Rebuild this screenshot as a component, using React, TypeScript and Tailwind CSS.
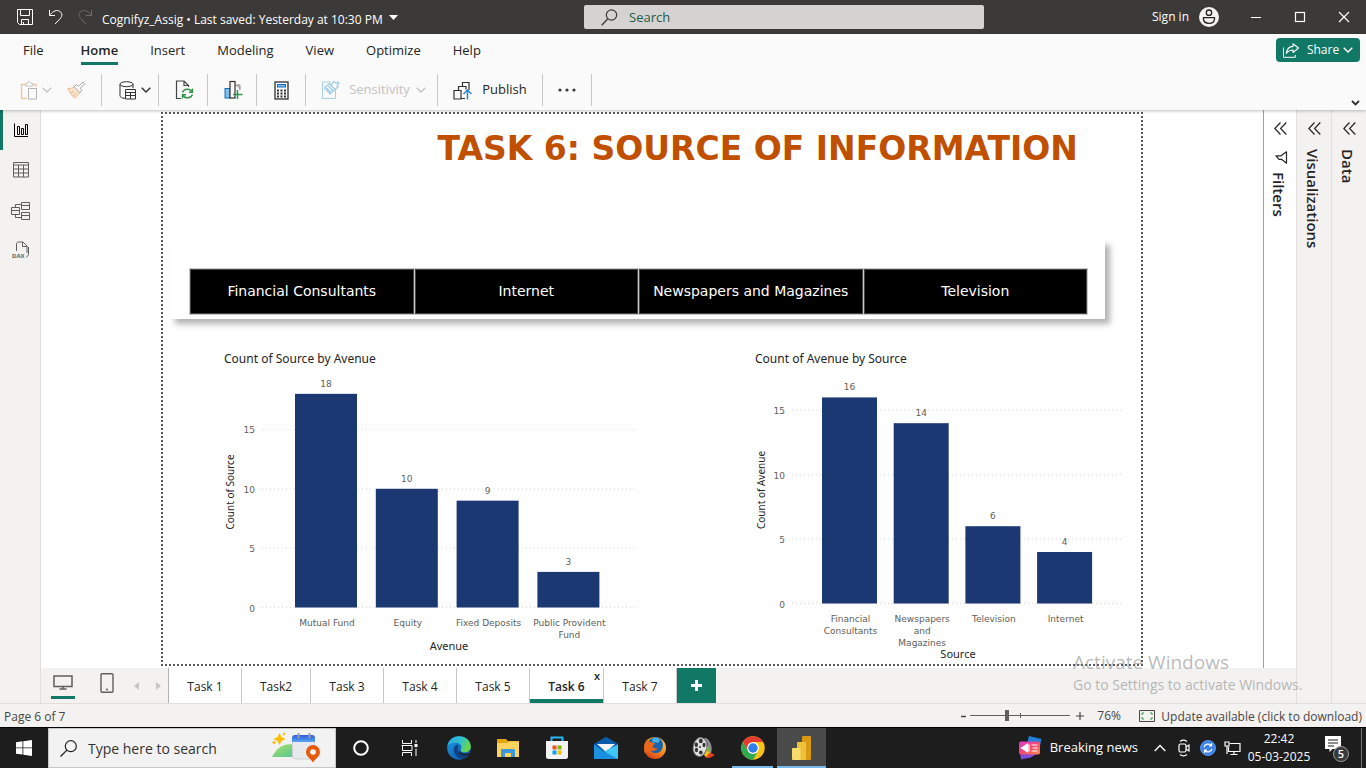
import type { ReactNode } from "react";

type IconProps = { w?: number; h?: number; children: ReactNode; className?: string };

function Icon({ w = 20, h = 20, children, className = "" }: IconProps) {
  return (
    <svg
      width={w}
      height={h}
      viewBox={`0 0 ${w} ${h}`}
      fill="none"
      stroke="currentColor"
      aria-hidden="true"
      className={`shrink-0 ${className}`}
    >
      {children}
    </svg>
  );
}

function Chevron({ className = "" }: { className?: string }) {
  return (
    <Icon w={10} h={6} className={className}>
      <path d="M.7.7 5 5 9.3.7" strokeWidth="1.4" />
    </Icon>
  );
}

function TitleBar() {
  return (
    <header className="flex h-[34px] shrink-0 items-center bg-[#3b3a39] text-[12px] text-white">
      <div className="flex min-w-0 flex-1 items-center pl-[17px]">
        <button aria-label="Save" className="mr-[15px]">
          <Icon w={16} h={16}>
            <path d="M.5.5h15v15H2.5l-2-2zM3.5.5v6h9v-6M4.5 15.5v-5h7v5M6.5 13v2.500" />
          </Icon>
        </button>
        <button aria-label="Undo" className="mr-[15px]">
          <Icon w={15} h={16}>
            <path d="M1.500 1v5.500H7M1.500 6.500C4 3 7.500.8 10.500 1.800c4 1.400 4.200 5 1.800 7.700L7 15" />
          </Icon>
        </button>
        <button aria-label="Redo" className="mr-[9px] text-[#6d6c6b]">
          <Icon w={15} h={16}>
            <path d="M13.500 1v5.500H8M13.500 6.500C11 3 7.500.8 4.500 1.800c-4 1.400-4.200 5-1.800 7.700L8 15" />
          </Icon>
        </button>
        <button className="flex items-center gap-[6px] pt-[6px] whitespace-nowrap">
          <span>Cognifyz_Assig • Last saved: Yesterday at 10:30 PM</span>
          <svg width="9" height="5" viewBox="0 0 9 5" className="mb-[6px]" aria-hidden="true">
            <path d="M0 0h9L4.500 5z" fill="#fff" />
          </svg>
        </button>
      </div>
      <label className="flex h-6 w-[400px] items-center gap-[11px] rounded-[2px] bg-[#d4d3d1] pl-[17px] text-[#3b3a39]">
        <Icon w={17} h={17}>
          <circle cx="10.500" cy="6" r="5.200" strokeWidth="1.200" />
          <path d="M6.800 9.700.7 16.200" strokeWidth="1.300" />
        </Icon>
        <span className="hidden">Search</span>
        <input
          type="search"
          placeholder="Search"
          aria-label="Search"
          className="h-full min-w-0 flex-1 bg-transparent text-[13px] outline-none placeholder:text-[#1f5c4c] placeholder:opacity-100"
        />
      </label>
      <div className="flex w-[382px] items-center justify-end pr-4">
        <button className="mr-[31px] flex items-center gap-[10px]">
          <span>Sign in</span>
          <svg width="20" height="20" viewBox="0 0 20 20" aria-hidden="true">
            <circle cx="10" cy="10" r="10" fill="#f3f2f1" />
            <circle cx="10" cy="5.700" r="2.700" fill="none" stroke="#222" strokeWidth="1.300" />
            <path d="M4.500 10.600h11v1.400c0 2.600-2.300 4.300-5.500 4.300S4.500 14.600 4.500 12z" fill="none" stroke="#222" strokeWidth="1.300" />
          </svg>
        </button>
        <button aria-label="Minimize" className="mr-[32px]">
          <Icon w={12} h={12}><path d="M1 6.500h10" /></Icon>
        </button>
        <button aria-label="Maximize" className="mr-[32px]">
          <Icon w={12} h={12}><rect x="1.500" y="1.500" width="9" height="9" strokeWidth="1.200" /></Icon>
        </button>
        <button aria-label="Close">
          <Icon w={12} h={12}><path d="m1 1 10 10M11 1 1 11" strokeWidth="1.200" /></Icon>
        </button>
      </div>
    </header>
  );
}

const menus = ["Insert", "Modeling", "View", "Optimize", "Help"];

function Group({ children, className }: { children: ReactNode; className: string }) {
  return (
    <div className={`flex h-8 items-center justify-center border-r border-[#c8c6c4] ${className}`}>{children}</div>
  );
}

function Ribbon() {
  return (
    <div className="relative z-10 flex h-[76px] shrink-0 flex-col bg-[#fafafa] shadow-[0_1px_3px_rgba(0,0,0,0.25)]">
      <div className="flex h-9 items-start justify-between pr-[6px]">
        <nav className="flex h-[31px] text-[13px] text-[#252423]">
          <a href="#file" className="mr-[5px] pt-[7px] pr-4 pl-[23px]">File</a>
          <a href="#home" className="mx-4 border-b-[3px] border-[#117865] pt-[7px] font-semibold">Home</a>
          {menus.map((m) => (
            <a key={m} href={`#${m.toLowerCase()}`} className="px-4 pt-[7px]">{m}</a>
          ))}
        </nav>
        <button className="mt-1 flex h-6 w-[84px] items-center justify-center rounded-[4px] bg-[#117865] text-[12px] text-white">
          <Icon w={16} h={15} className="mr-2">
            <path d="M.5 4.500v9.800h11.800V12" />
            <path d="M10 .8 15.500 5 10 9.500V7C7 7 5 8.200 3.300 10.500 3.800 6.500 6 3.600 10 3.400z" strokeWidth="1.100" strokeLinejoin="round" />
          </Icon>
          Share
          <Chevron className="ml-1" />
        </button>
      </div>
      <div className="flex items-center pt-1">
        <Group className="w-[102px] gap-[15px] pl-1">
          <button aria-label="Paste" className="flex items-center gap-1 text-[#c8c6c4]">
            <Icon w={18} h={19}>
              <path d="M5 3.500H1.500v14H7M13 3.500h3V6" stroke="#f0c9a4" strokeWidth="1.400" />
              <path d="M5.500 5V2.500h2c0-2.500 3.500-2.500 3.500 0h2V5z" fill="#fafafa" stroke="#c8c6c4" />
              <rect x="8.500" y="7.500" width="8" height="10.500" fill="#fafafa" stroke="#b8b6b4" />
            </Icon>
            <Chevron />
          </button>
          <button aria-label="Format painter">
            <Icon w={19} h={18}>
              <path d="M1 7.500c3.500 0 4.500-.5 6-2l6 6c-1.500 1.500-3.500 4-4.500 5.500C5 15.500 3 12 1 7.500z" fill="#fbe3cc" stroke="#edb98a" />
              <path d="m7 5.500 2.500-2 2 2L16 1l1.800 1.800-4.500 4.500 1.500 2-2 2.300z" fill="#fafafa" stroke="#a8a6a4" />
              <path d="m4 12 3-2M6 15l3-3" stroke="#edb98a" />
            </Icon>
          </button>
        </Group>
        <Group className="w-[57px] pl-[9px]">
          <button aria-label="Get data" className="flex items-center gap-1 text-[#323130]">
            <Icon w={18} h={19}>
              <ellipse cx="7.500" cy="3.200" rx="6.500" ry="2.500" />
              <path d="M1 3.200v11.500c0 1.500 2 2.500 5 2.600M14 3.200v4" />
              <path d="M6.500 8.500h10v9.500h-10zM6.500 11.500h10M6.500 14.500h10M11.500 11.500V18" fill="#fafafa" />
            </Icon>
            <Chevron />
          </button>
        </Group>
        <Group className="w-[49px] pl-[3px]">
          <button aria-label="Refresh">
            <Icon w={19} h={20}>
              <path d="M6 18.500H1.500V1H9l4.500 4.500V7M9 1v4.500h4.500" stroke="#444" strokeWidth="1.200" />
              <path d="M7.500 12.500c1.500-4 7.500-4.500 9.500-.8M17.500 8.500v3.700H14M17.500 14.500c-1.500 4-7.500 4.500-9.500.8M7.500 18.500v-3.700H11" stroke="#33944b" strokeWidth="1.400" />
            </Icon>
          </button>
        </Group>
        <Group className="w-[49px] pl-[2px]">
          <button aria-label="New visual">
            <Icon w={19} h={20}>
              <rect x="1" y="8.500" width="5" height="9.500" fill="#83bdec" stroke="#0f6cbd" />
              <path d="M11 5h5v5" fill="#c8c6c4" stroke="#8a8886" />
              <rect x="6" y="1.500" width="5" height="16.500" fill="#fafafa" stroke="#323130" strokeWidth="1.200" />
              <path d="M13.500 10v9M9 14.500h9.500" stroke="#33944b" strokeWidth="1.500" />
            </Icon>
          </button>
        </Group>
        <Group className="w-[49px]">
          <button aria-label="New measure">
            <Icon w={15} h={19}>
              <rect x="1" y="1" width="13" height="17" stroke="#323130" strokeWidth="1.300" />
              <rect x="3.500" y="3.500" width="8" height="2.500" fill="#83bdec" stroke="#0f6cbd" />
              <path d="M3 9.500h9M3 12.500h9M3 15.500h9" stroke="#323130" strokeWidth="2" strokeDasharray="2 1.500" />
            </Icon>
          </button>
        </Group>
        <Group className="w-[132px] pl-1">
          <button disabled className="flex items-center text-[13px] text-[#c4c2c0]">
            <Icon w={19} h={20} className="mr-[9px]">
              <path d="M10 2H1.500v16.500h13V9" stroke="#a9cfe6" />
              <path d="m3.500 8 5-4.500 5.500 6-5 4.500zM5.500 8l5 5M7.500 6l5 5.500M10 5l3-3.500 2.500 2L17 2l1 1.500-2 2.500 1 1-3 2.500" stroke="#9ccbe6" strokeWidth="1.200" />
            </Icon>
            Sensitivity
            <Chevron className="ml-[6px]" />
          </button>
        </Group>
        <Group className="w-[105px]">
          <button className="flex items-center gap-[10px] text-[13px] text-[#252423]">
            <Icon w={19} h={19}>
              <path d="M5.500 9V5.500h4M9.500 5V1.500H16V9M1 9.500h7V18H1zM5.500 9.500V5.500H13v3M8 17.500h4" stroke="#323130" strokeWidth="1.200" />
              <path d="M14.500 18.500V9.500M10.500 13l4-4 4 4" stroke="#2b88d8" strokeWidth="1.500" />
            </Icon>
            Publish
          </button>
        </Group>
        <Group className="w-[49px]">
          <button aria-label="More options">
            <svg width="18" height="4" viewBox="0 0 18 4" fill="#3b3a39" aria-hidden="true">
              <circle cx="2" cy="2" r="1.600" /><circle cx="9" cy="2" r="1.600" /><circle cx="16" cy="2" r="1.600" />
            </svg>
          </button>
        </Group>
      </div>
      <button aria-label="Collapse ribbon" className="absolute right-[6px] bottom-1 text-[#323130]">
        <Icon w={9} h={6}><path d="m1 1 3.500 3.500L8 1" strokeWidth="1.800" /></Icon>
      </button>
    </div>
  );
}

function ViewRail() {
  const item = "flex h-10 w-full items-center justify-center pl-px text-[#605e5c]";
  return (
    <nav className="w-[41px] shrink-0 border-r border-[#e1dfdd] bg-[#f3f2f1]">
      <button aria-label="Report view" className="flex h-10 w-full items-center justify-center border-l-[3px] border-[#117865] pr-px text-black">
        <Icon w={14} h={14}>
          <path d="M.5.500v13h13.500M3.500 3.500h2v8h-2zM7.500 5.500h2v6h-2zM11.500 1.500h2v10h-2z" strokeWidth="1" />
        </Icon>
      </button>
      <button aria-label="Table view" className={item}>
        <Icon w={16} h={16}>
          <path d="M.5.5h15v14.500H.5zM.5 3h15M.5 7h15M.5 11h15M5.500 3v12M10.500 3v12" />
        </Icon>
      </button>
      <button aria-label="Model view" className={item}>
        <Icon w={19} h={19}>
          <path d="M.5 6.500h8v7h-8zM.5 9.500h8M10.500 1.500h8v7h-8zM10.500 4.500h8M10.500 11.500h8v7h-8zM10.500 14.500h8M4.500 6.500v-3h6M4.500 13.500v3h6" />
        </Icon>
      </button>
      <button aria-label="DAX query view" className={item}>
        <svg width="18" height="18" viewBox="0 0 18 18" fill="none" stroke="#605e5c" aria-hidden="true">
          <path d="M4.500 10V3c0-1.200.8-2 2-2H11l4 4v7M10.500 1v4.500H15M16.500 6v7.500l-2 3" />
          <text x="0" y="16.500" fontSize="6" fontWeight="700" fill="#605e5c" stroke="none">DAX</text>
        </svg>
      </button>
    </nav>
  );
}

type Bar = { lines: string[]; value: number };
type ChartProps = {
  title: string;
  xTitle: string;
  yTitle: string;
  bars: Bar[];
  width: number;
  height: number;
  zeroY: number;
  unit: number;
  firstX: number;
  step: number;
  barWidth: number;
  gridStart: number;
  gridEnd: number;
  xTitleX: number;
  xTitleY: number;
  yTitleY: number;
};

function BarChart(c: ChartProps) {
  return (
    <svg viewBox={`0 0 ${c.width} ${c.height}`} className="block w-full" role="img" aria-label={c.title} fontFamily="Noto Sans, sans-serif">
      <text x="4" y="18" fontSize="12" fill="#252423">{c.title}</text>
      {[0, 5, 10, 15].map((t) => {
        const y = c.zeroY - t * c.unit;
        return (
          <g key={t}>
            <line x1={c.gridStart} x2={c.gridEnd} y1={y} y2={y} stroke="#d6d6d6" strokeDasharray="1 3" />
            <text x={c.gridStart - 7} y={y + 4} textAnchor="end" fontSize="9" fill="#605e5c" fontFamily="DejaVu Sans, sans-serif">{t}</text>
          </g>
        );
      })}
      {c.bars.map((b, i) => {
        const x = c.firstX + i * c.step;
        const top = c.zeroY - b.value * c.unit;
        const mid = x + c.barWidth / 2;
        return (
          <g key={b.lines[0]} fontFamily="DejaVu Sans, sans-serif" fontSize="9" fill="#605e5c" textAnchor="middle">
            <rect x={x} y={top} width={c.barWidth} height={c.zeroY - top} fill="#1c3873" />
            <text x={mid} y={top - 7}>{b.value}</text>
            {b.lines.map((line, n) => (
              <text key={line} x={mid + 1} y={c.zeroY + 18 + n * 12}>{line}</text>
            ))}
          </g>
        );
      })}
      <text x={c.xTitleX} y={c.xTitleY} textAnchor="middle" fontSize="11" fill="#252423">{c.xTitle}</text>
      <text transform={`translate(14 ${c.yTitleY}) rotate(-90)`} textAnchor="middle" fontSize="10" fill="#252423">{c.yTitle}</text>
    </svg>
  );
}

const avenueBars: Bar[] = [
  { lines: ["Mutual Fund"], value: 18 },
  { lines: ["Equity"], value: 10 },
  { lines: ["Fixed Deposits"], value: 9 },
  { lines: ["Public Provident", "Fund"], value: 3 },
];

const sourceBars: Bar[] = [
  { lines: ["Financial", "Consultants"], value: 16 },
  { lines: ["Newspapers", "and", "Magazines"], value: 14 },
  { lines: ["Television"], value: 6 },
  { lines: ["Internet"], value: 4 },
];

const sources = ["Financial Consultants", "Internet", "Newspapers and Magazines", "Television"];

function ReportPage() {
  return (
    <main className="min-w-0 flex-1 bg-white px-[120px] pt-[2px] pb-[2px]">
      <div className="h-full border-2 border-dotted border-[#5a5a5a]">
        <h1 className="mt-[14px] mr-[63px] text-right font-['DejaVu_Sans',sans-serif] text-[33px] leading-[42px] font-bold text-[#c05000]">
          TASK 6: SOURCE OF INFORMATION
        </h1>
        <div className="mt-[70px] mr-[36px] ml-[7px] bg-white pt-[28px] pr-[17px] pb-1 pl-[19px] shadow-[5px_5px_6px_rgba(0,0,0,0.3)]">
          <div className="grid grid-cols-4 gap-px bg-[#c8c8c8] p-px font-['DejaVu_Sans',sans-serif] text-[14px] text-white">
            {sources.map((s) => (
              <button key={s} className="h-[45px] border border-[#444] bg-black whitespace-nowrap">{s}</button>
            ))}
          </div>
        </div>
        <div className="mt-[26px] flex pl-[57px]">
          <div className="min-w-0 flex-[420]">
            <BarChart
              title="Count of Source by Avenue" xTitle="Avenue" yTitle="Count of Source"
              bars={avenueBars} width={420} height={315} zeroY={262.500} unit={11.870}
              firstX={75} step={80.800} barWidth={62} gridStart={42} gridEnd={415}
              xTitleX={229} xTitleY={305} yTitleY={147}
            />
          </div>
          <div className="flex-[111]" />
          <div className="min-w-0 flex-[380]">
            <BarChart
              title="Count of Avenue by Source" xTitle="Source" yTitle="Count of Avenue"
              bars={sourceBars} width={380} height={316} zeroY={258.500} unit={12.880}
              firstX={71} step={71.700} barWidth={55} gridStart={41} gridEnd={373}
              xTitleX={207} xTitleY={313} yTitleY={145}
            />
          </div>
          <div className="flex-[10]" />
        </div>
      </div>
    </main>
  );
}

function DoubleChevron() {
  return (
    <Icon w={13} h={13}>
      <path d="M6.500.500.800 6.500l5.700 6M12.300.500l-5.700 6 5.700 6" strokeWidth="1.200" />
    </Icon>
  );
}

function Pane({ title, className, children }: { title: string; className: string; children?: ReactNode }) {
  return (
    <aside className={`flex shrink-0 flex-col items-center border-l pt-3 text-[#252423] ${className}`}>
      <button aria-label={`Expand ${title}`}><DoubleChevron /></button>
      {children}
      <h2 className="mt-[14px] pr-[3px] text-[15px] leading-4 font-semibold [writing-mode:vertical-rl]">{title}</h2>
    </aside>
  );
}

const pages = [
  { name: "Task 1", w: "w-[73px]" },
  { name: "Task2", w: "w-[69px]" },
  { name: "Task 3", w: "w-[73px]" },
  { name: "Task 4", w: "w-[73px]" },
  { name: "Task 5", w: "w-[73px]" },
  { name: "Task 6", w: "w-[74px]" },
  { name: "Task 7", w: "w-[73px]" },
];

function PageTabs() {
  return (
    <div className="flex h-[35px] shrink-0 bg-[#f3f2f1] text-[12px] text-[#252423]">
      <div className="flex w-[127px] items-start text-[#605e5c]">
        <button aria-label="Desktop layout" className="ml-[10px] flex h-[31px] w-6 flex-col items-center justify-between border-b-[3px] border-[#117865] pt-[7px]">
          <Icon w={20} h={15}>
            <path d="M1 1h18v10.500H1zM10 11.500V14M6.500 14h7" strokeWidth="1.500" />
          </Icon>
        </button>
        <button aria-label="Mobile layout" className="mt-[5px] ml-[25px]">
          <Icon w={14} h={20}><rect x="1" y=".800" width="12" height="18.500" rx="1" strokeWidth="1.400" /><path d="M6 16.500h2" strokeWidth="1.500" /></Icon>
        </button>
        <button aria-label="Previous page" className="mt-[14px] ml-5">
          <svg width="5" height="8" viewBox="0 0 5 8" aria-hidden="true"><path d="M5 0v8L0 4z" fill="#c8c6c4" /></svg>
        </button>
        <button aria-label="Next page" className="mt-[14px] ml-[17px]">
          <svg width="5" height="8" viewBox="0 0 5 8" aria-hidden="true"><path d="M0 0v8l5-4z" fill="#c8c6c4" /></svg>
        </button>
      </div>
      <div className="flex border-l border-[#b3b0ad]">
        {pages.map((p) => {
          const active = p.name === "Task 6";
          return (
            <button
              key={p.name}
              className={`relative border-r border-[#c8c6c4] bg-white pt-[2px] ${p.w} ${active ? "font-semibold" : ""}`}
            >
              {p.name}
              {active && <span className="absolute top-0 right-[3px] text-[11px]">x</span>}
              {active && <span className="absolute inset-x-0 bottom-0 h-1 bg-[#117865]" />}
            </button>
          );
        })}
        <button aria-label="New page" className="flex w-[39px] items-center justify-center bg-[#117865] text-white">
          <Icon w={11} h={11}><path d="M5.500 0v11M0 5.500h11" strokeWidth="3" /></Icon>
        </button>
      </div>
    </div>
  );
}

function StatusBar() {
  return (
    <footer className="flex h-6 shrink-0 items-center border-t border-[#e1dfdd] bg-[#f3f2f1] pr-1 pl-1 text-[12px] text-[#484644]">
      <span className="mr-auto pt-[2px]">Page 6 of 7</span>
      <button aria-label="Zoom out" className="mr-1"><Icon w={5} h={10}><path d="M0 5.500h5" strokeWidth="1.500" /></Icon></button>
      <span className="relative flex items-center">
        <input type="range" aria-label="Zoom level" min={10} max={400} defaultValue={150} className="h-4 w-[100px] cursor-pointer appearance-none bg-transparent [&::-webkit-slider-runnable-track]:h-px [&::-webkit-slider-runnable-track]:bg-[#605e5c] [&::-webkit-slider-thumb]:-mt-[5px] [&::-webkit-slider-thumb]:h-[11px] [&::-webkit-slider-thumb]:w-1 [&::-webkit-slider-thumb]:appearance-none [&::-webkit-slider-thumb]:bg-[#605e5c]" />
        <span className="absolute left-1/2 h-[5px] w-px bg-[#605e5c]" />
      </span>
      <button aria-label="Zoom in" className="mr-[13px] ml-[6px]"><Icon w={8} h={9}><path d="M4 1v8M0 5h8" strokeWidth="1.200" /></Icon></button>
      <span className="w-[42px]">76%</span>
      <button aria-label="Fit to page" className="mr-[6px]">
        <Icon w={16} h={12}>
          <path d="M.5.5h15v11H.5z" />
          <path d="M3 5V3h2M11 3h2v2M13 7v2h-2M5 9H3V7" stroke="#33944b" />
        </Icon>
      </button>
      <a href="#update" className="pt-[2px]">Update available (click to download)</a>
    </footer>
  );
}

function TaskButton({ label, children, running, active }: { label: string; children: ReactNode; running?: boolean; active?: boolean }) {
  return (
    <button
      aria-label={label}
      className={`relative flex w-[49px] items-center justify-center ${active ? "bg-[#4a4a4a]" : ""}`}
    >
      <svg width="24" height="24" viewBox="0 0 24 24" fill="none" aria-hidden="true">{children}</svg>
      {running && <span className={`absolute bottom-0 h-[2px] bg-[#76b9ed] ${active ? "inset-x-0" : "inset-x-1"}`} />}
    </button>
  );
}

function Taskbar() {
  return (
    <div className="flex h-[41px] shrink-0 border-t border-black bg-[#1d1d1d] text-white">
      <button aria-label="Start" className="flex w-12 items-center justify-center">
        <svg width="16" height="16" viewBox="0 0 16 16" fill="#fff" aria-hidden="true">
          <path d="M0 2.200 6.500 1.300v6.200H0zM7.300 1.200 16 0v7.500H7.300zM0 8.300h6.500v6.300L0 13.700zM7.300 8.300H16V16l-8.700-1.200z" />
        </svg>
      </button>
      <label className="flex w-72 items-center border border-[#c6c6c6] bg-[#f2f2f2] pl-[11px] text-[#222]">
        <Icon w={17} h={17} className="mr-[11px]">
          <circle cx="10.800" cy="6.200" r="5.500" strokeWidth="1.200" />
          <path d="M6.900 10.100.500 16.500" strokeWidth="1.300" />
        </Icon>
        <span className="hidden">Type here to search</span>
        <input type="search" placeholder="Type here to search" aria-label="Type here to search" className="h-full min-w-0 flex-1 bg-transparent text-[14px] outline-none placeholder:text-[#333] placeholder:opacity-100" />
        <svg width="50" height="32" viewBox="0 0 50 32" className="mr-[13px]" aria-hidden="true">
          <defs>
            <linearGradient id="hill" x1="0" y1="0" x2="1" y2="1"><stop stopColor="#a8e063" /><stop offset="1" stopColor="#55c59a" /></linearGradient>
            <linearGradient id="cal" x1="0" y1="0" x2="0" y2="1"><stop stopColor="#2f5bd8" /><stop offset="1" stopColor="#58a7f0" /></linearGradient>
          </defs>
          <path d="M0 25C5 15 12 10 24 13v12z" fill="url(#hill)" />
          <path d="m7.500 1 2 4 4 2-4 2-2 4-2-4-4-2 4-2z" fill="#fbbc05" />
          <circle cx="12" cy="2" r="1.200" fill="#fbbc05" /><circle cx="2" cy="10.500" r="1.500" fill="#fbbc05" />
          <rect x="20.500" y="4" width="22" height="23" rx="3" fill="#e7e9ec" stroke="#cfd2d6" />
          <path d="M20 10V6c0-2 1-3 3-3h17c2 0 3 1 3 3v4z" fill="url(#cal)" />
          <path d="M26.500 1v5M37.500 1v5" stroke="#9aa0a6" strokeWidth="2" />
          <path d="M41 30.500c-2.500-4-7-6-7-10.500a7 7 0 0 1 14 0c0 4.500-4.500 6.500-7 10.500z" fill="#e8590c" />
          <circle cx="41" cy="20" r="2.800" fill="#fff" />
        </svg>
      </label>
      <TaskButton label="Cortana"><circle cx="12" cy="12" r="6.800" stroke="#fff" strokeWidth="2" /></TaskButton>
      <TaskButton label="Task view">
        <path d="M4.500 4v3.500h9V4M4.500 20v-3.500h9V20M3.500 9.500h10.500v5H4.500v-5M18 4v3M18 12.500V20" stroke="#fff" />
        <rect x="16.500" y="8" width="3" height="3" fill="#fff" />
      </TaskButton>
      <TaskButton label="Edge">
        <defs>
          <linearGradient id="e1" x1="0" y1="0" x2="1" y2=".4"><stop stopColor="#22a5e0" /><stop offset=".6" stopColor="#35c1cc" /><stop offset="1" stopColor="#67d64b" /></linearGradient>
          <linearGradient id="e2" x1="0" y1="0" x2="1" y2="1"><stop stopColor="#1b9de2" /><stop offset="1" stopColor="#0c4ba5" /></linearGradient>
        </defs>
        <circle cx="12" cy="12" r="11.800" fill="url(#e2)" />
        <path d="M.4 10C1.200 4 6 .2 12 .2 19 .2 23.800 5 23.800 10.500c0 4-3 5.800-6 5.800-3.500 0-4.800-1.500-3.800-3 1.500-2.500 0-6-4.200-6.500C5.500 6.200 1.500 7.500.4 10z" fill="url(#e1)" />
        <path d="M10 8.500c-3 1.500-4 5-2.500 8.500 1.800 4.300 6 6.500 10 5.300 2-.8 3.500-2 4.800-4-3 1.700-7 1.300-9.500-.5-2-1.500-2.500-3.500-1.800-5 .8-1.300.5-3.300-1-4.300z" fill="#123f80" />
        <path d="M12 13.500c.5 4 5.500 5.500 11 3.300l-.7 1.500c-3 1.800-7 1.200-9.300-.5-1.200-1-1.500-2.800-1-4.300z" fill="#1d1d1d" />
      </TaskButton>
      <TaskButton label="File Explorer">
        <path d="M1 3h9l2 2h11v16H1z" fill="#e5a50f" />
        <path d="M1 7h10l2-1.500h10V21H1z" fill="#ffd45e" />
        <path d="M5 21v-6.500c0-1 .5-1.500 1.500-1.500h11c1 0 1.500.5 1.500 1.500V21h-4v-4H9v4z" fill="#3e97d8" />
      </TaskButton>
      <TaskButton label="Microsoft Store">
        <path d="M6.500 6V1.500h11V6" stroke="#2db5ee" strokeWidth="2" />
        <path d="M1 5h22v15.500c0 1.800-1 2.500-2.500 2.500h-17C2 23 1 22.300 1 20.500z" fill="#f3f3f3" />
        <path d="M7.500 9.500h4v4h-4z" fill="#f25022" /><path d="M12.500 9.500h4v4h-4z" fill="#7fba00" />
        <path d="M7.500 14.500h4v4h-4z" fill="#00a4ef" /><path d="M12.500 14.500h4v4h-4z" fill="#ffb900" />
      </TaskButton>
      <TaskButton label="Mail">
        <path d="M0 8 12 .8 24 8v15H0z" fill="#0a5ca8" />
        <path d="M3 8h18l-9 8z" fill="#f5f5f5" />
        <path d="M0 8.500 12 17l12-8.500V23H0z" fill="#1b8fe0" />
        <path d="M24 8.500V23L10 15.500z" fill="#3fc6f5" />
      </TaskButton>
      <TaskButton label="Firefox">
        <defs><linearGradient id="fx" x1=".8" y1="0" x2=".2" y2="1"><stop stopColor="#ffd83c" /><stop offset=".5" stopColor="#f58a1f" /><stop offset="1" stopColor="#d5391b" /></linearGradient></defs>
        <circle cx="12" cy="12" r="11" fill="url(#fx)" />
        <path d="M5 6C7 2 11 .5 15 1.500c4 1.500 6 6 4.500 10.500-1 3.500-4 5.500-7.500 5-3-.3-5-2-5-4l3-.5-1-3L5 9z" fill="#1a63ae" />
        <path d="M9 3c3-2 6-1.500 8 1l-2 3-3-1-2 1z" fill="#49b2e8" />
        <path d="M1.500 8 4 3l2 3c1.500-.5 3 0 3.500 1l3 .5-3 2.500 1 2 4 .5c-2 3-6 3-8.500 1.500L1.500 17z" fill="#e8671b" />
      </TaskButton>
      <TaskButton label="Movie Maker">
        <ellipse cx="14.500" cy="11" rx="5" ry="9" fill="#8c8c8c" transform="rotate(-12 14 11)" />
        <path d="M12 4c3 0 4 4 4 8l-4 5z" fill="#3157d5" />
        <path d="M13 9c3-1 4 4 5 7l-5 1z" fill="#72c52a" />
        <path d="M14.500 14.500c3 2 5 3 8 4-2 3-6 4.500-9 3z" fill="#e8421c" />
        <path d="m14 15 4 1-4 5-2-2z" fill="#f6c51e" />
        <ellipse cx="8" cy="11" rx="6.800" ry="9.500" fill="#e2e2e2" stroke="#777" transform="rotate(10 8 11)" />
        <g fill="#333"><ellipse cx="8.800" cy="5" rx="2" ry="2.300" /><ellipse cx="4.300" cy="8.800" rx="1.700" ry="2.200" /><ellipse cx="12" cy="9" rx="1.500" ry="2.200" /><ellipse cx="4.500" cy="14" rx="1.600" ry="2.200" /><ellipse cx="8.800" cy="16.500" rx="1.900" ry="2" /><circle cx="8" cy="11" r="1" /></g>
      </TaskButton>
      <TaskButton label="Chrome" running>
        <circle cx="12" cy="12" r="11.800" fill="#fbc116" />
        <path d="M1.800 6.100A11.800 11.800 0 0 1 22.200 6.100H12L6.900 15z" fill="#e33b2e" />
        <path d="M1.800 6.100A11.800 11.800 0 0 0 12 23.800l5.100-8.900L12 17.900 6.900 15z" fill="#2da94f" />
        <circle cx="12" cy="12" r="5.900" fill="#fff" /><circle cx="12" cy="12" r="4.700" fill="#2f7de9" />
      </TaskButton>
      <TaskButton label="Power BI" running active>
        <rect x="12" y="0" width="9" height="24" rx="1" fill="#d99a12" />
        <rect x="7" y="6" width="9" height="18" rx="1" fill="#f0c23c" />
        <rect x="2" y="12" width="8.500" height="12" rx="1" fill="#f8dc6b" />
      </TaskButton>
      <div className="ml-auto flex items-center">
        <button className="mr-4 flex items-center gap-2 text-[13px]">
          <svg width="24" height="24" viewBox="0 0 24 24" aria-hidden="true">
            <defs><linearGradient id="nw" x1="0" y1="0" x2="1" y2="1"><stop stopColor="#d63fd0" /><stop offset=".5" stopColor="#f8486e" /><stop offset="1" stopColor="#ff8a50" /></linearGradient></defs>
            <path d="m11 0 12.500 3L21.500 12H8z" fill="#1d83dc" />
            <path d="m1.500 14 18.500 3-7 4.500L3 23.500z" fill="#7c4ddb" />
            <rect x="1" y="5.500" width="21" height="13" rx="2" fill="url(#nw)" />
            <path d="M3.500 12 9.500 8v8zM11 8.500v7M13.500 9h6M14.500 12h5M13.500 15h6" fill="#fff" stroke="#fff" strokeWidth="1.200" />
          </svg>
          Breaking news
        </button>
        <button aria-label="Show hidden icons" className="mr-[11px]"><Icon w={12} h={8}><path d="m.7 7 5.300-5.500L11.300 7" strokeWidth="1.300" /></Icon></button>
        <button aria-label="Meet now" className="mr-[9px]">
          <Icon w={14} h={18}><rect x="2" y="5" width="7" height="8" rx="1.500" strokeWidth="1.200" /><path d="m9 8 3-2v6l-3-2M3 2.500C5 1 8 1 10 2.500M3 15.500c2 1.500 5 1.500 7 0" strokeWidth="1.200" /></Icon>
        </button>
        <button aria-label="Sync" className="mr-2">
          <Icon w={16} h={16}><circle cx="8" cy="8" r="7.500" fill="#3d82e8" stroke="#5a98f2" /><path d="M4 7c1-3 5-4 7.500-1.500M12 9c-1 3-5 4-7.500 1.500M11.500 3v2.800H9M4.500 13v-2.800H7" stroke="#fff" strokeWidth="1.200" /></Icon>
        </button>
        <button aria-label="Network" className="mr-2">
          <Icon w={17} h={15}><path d="M6 2.500h10v8H4.500V6M10 10.500v3M6.500 13.500h7" strokeWidth="1.200" /><path d="M1 1h4v4H1zM3 5v8" strokeWidth="1.200" /></Icon>
        </button>
        <div className="mr-4 flex w-[60px] flex-col items-center text-[12px] leading-[18px] whitespace-nowrap">
          <span>22:42</span>
          <span>05-03-2025</span>
        </div>
        <button aria-label="5 notifications" className="relative mr-3 h-7 w-6">
          <svg width="16" height="17" viewBox="0 0 16 17" className="mb-2" aria-hidden="true">
            <path d="M0 0h16v13H7.500L4.500 16v-3H0z" fill="#fff" /><path d="M3 4h10M3 7h10M3 10h6" stroke="#1d1d1d" />
          </svg>
          <span className="absolute right-0 bottom-0 flex size-4 items-center justify-center rounded-full border border-[#999] bg-[#3a3a3a] text-[11px] font-semibold">5</span>
        </button>
        <span className="mr-1 h-full w-px bg-[#777]" />
      </div>
    </div>
  );
}

export default function App() {
  return (
    <div className="relative flex min-h-screen flex-col bg-white font-['Open_Sans','Noto_Sans',sans-serif]">
      <TitleBar />
      <Ribbon />
      <div className="flex flex-1">
        <ViewRail />
        <div className="flex min-w-0 flex-1 flex-col">
          <div className="flex flex-1">
            <ReportPage />
            <Pane title="Filters" className="w-[33px] border-[#a19f9d] bg-white">
              <Icon w={13} h={13} className="mt-4 -mb-[6px] ml-[3px]"><path d="M11.500.800v11.400L6.500 8.300H4L1 4.800h5z" strokeWidth="1.200" strokeLinejoin="round" /></Icon>
            </Pane>
          </div>
          <PageTabs />
        </div>
        <Pane title="Visualizations" className="w-[35px] border-[#e1dfdd] bg-[#f3f2f1]" />
        <Pane title="Data" className="w-[35px] border-[#e1dfdd] bg-[#f3f2f1]" />
      </div>
      <StatusBar />
      <Taskbar />
      <div className="pointer-events-none absolute right-[56px] bottom-[72px] w-[237px] whitespace-nowrap text-[#808080]/55">
        <p className="text-[19px] leading-6">Activate Windows</p>
        <p className="text-[14px] leading-[22px]">Go to Settings to activate Windows.</p>
      </div>
    </div>
  );
}
